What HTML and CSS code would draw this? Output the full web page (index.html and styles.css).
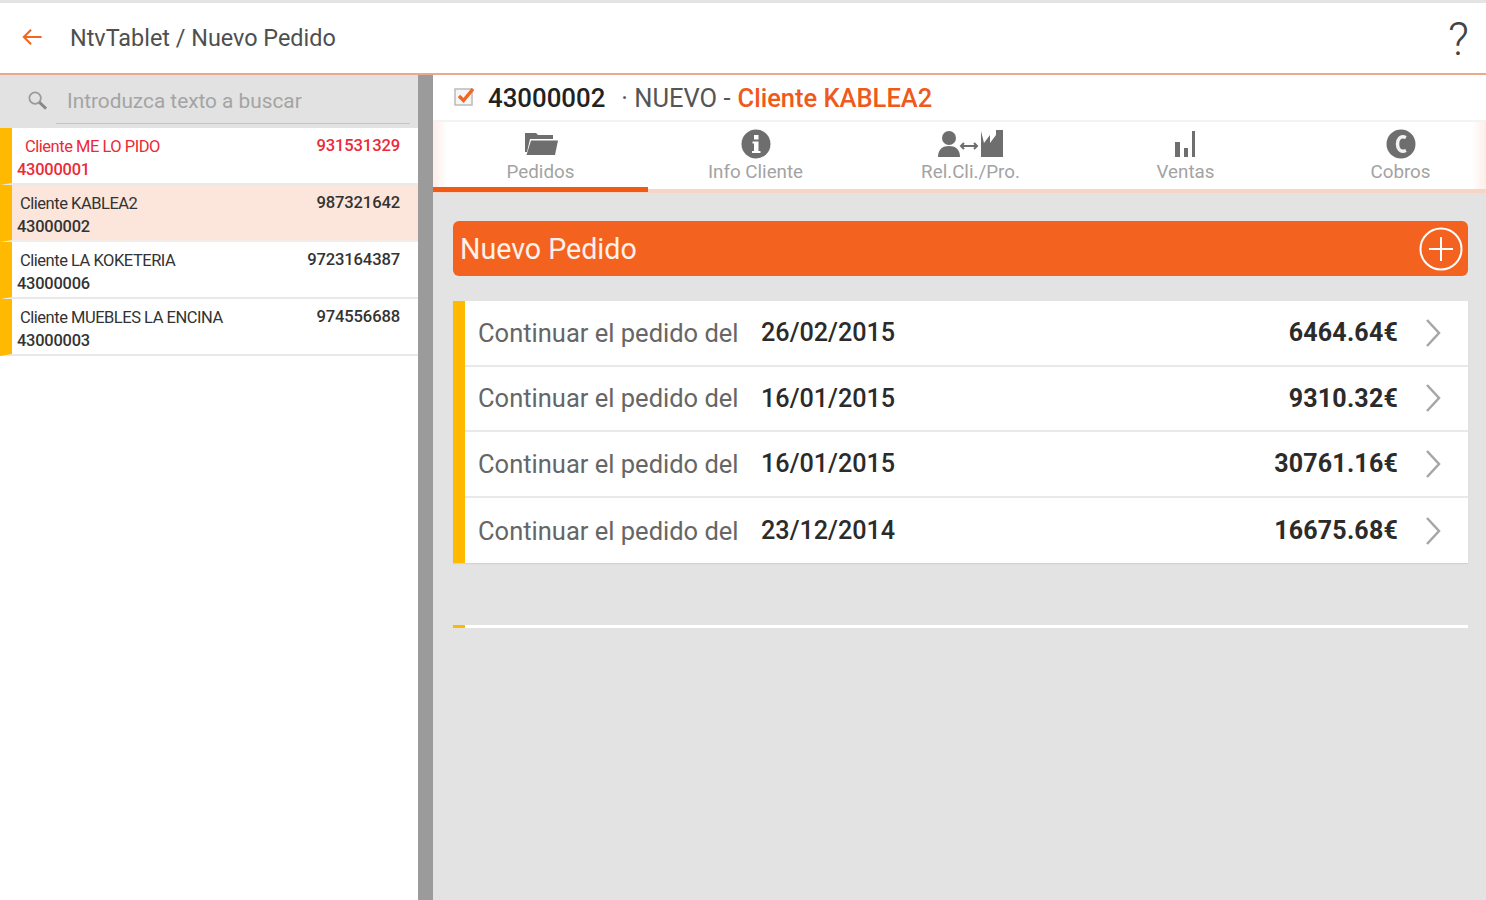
FILE: index.html
```html
<!DOCTYPE html>
<html lang="es">
<head>
<meta charset="utf-8">
<title>NtvTablet / Nuevo Pedido</title>
<link rel="stylesheet" href="styles.css">
</head>
<body>
<div class="app">
  <header class="topbar">
    <svg class="back" viewBox="0 0 24 20" aria-hidden="true"><path d="M21.5 10H3M10.5 2.5L3 10l7.5 7.5"/></svg>
    <span class="apptitle">NtvTablet / Nuevo Pedido</span>
    <span class="help">?</span>
  </header>
  <div class="main">
    <aside class="side">
      <div class="search">
        <svg class="lens" viewBox="0 0 22 22" aria-hidden="true"><circle cx="8.5" cy="8.5" r="6"/><path class="thick" d="M13 13l7 6.5"/></svg>
        <span class="placeholder">Introduzca texto a buscar</span>
        <span class="underline"></span>
      </div>
      <div class="client alert">
        <div class="l1"><span class="cname first">Cliente ME LO PIDO</span><span class="phone">931531329</span></div>
        <div class="code">43000001</div>
      </div>
      <div class="client selected">
        <div class="l1"><span class="cname">Cliente KABLEA2</span><span class="phone">987321642</span></div>
        <div class="code">43000002</div>
      </div>
      <div class="client">
        <div class="l1"><span class="cname">Cliente LA KOKETERIA</span><span class="phone">9723164387</span></div>
        <div class="code">43000006</div>
      </div>
      <div class="client">
        <div class="l1"><span class="cname">Cliente MUEBLES LA ENCINA</span><span class="phone">974556688</span></div>
        <div class="code">43000003</div>
      </div>
    </aside>
    <section class="detail">
      <div class="dhead">
        <svg class="check" viewBox="0 0 24 22" aria-hidden="true"><rect class="box" x="2" y="4" width="17" height="16"/><path class="tick" d="M6 11l4.500 4.500L20 4"/></svg>
        <span class="num">43000002</span>
        <span class="state">· NUEVO -</span>
        <span class="cli">Cliente KABLEA2</span>
      </div>
      <nav class="tabs">
        <div class="tab active">
          <svg class="ti" viewBox="0 0 36 28" aria-hidden="true"><path d="M2 3h11l2 2h15v4H7L4 22H2z"/><path d="M8 10.500h27L32 25H3.500z"/></svg>
          <span>Pedidos</span>
        </div>
        <div class="tab">
          <svg class="ti" viewBox="0 0 36 28" aria-hidden="true"><circle cx="18" cy="14" r="14.500"/><rect class="cut" x="16" y="5" width="4.500" height="4.500"/><path class="cut" d="M14.500 11.500h6v9.500h2v2h-8.500v-2h2v-7.500h-1.500z"/></svg>
          <span>Info Cliente</span>
        </div>
        <div class="tab">
          <svg class="ti wide" viewBox="0 0 68 28" aria-hidden="true"><circle cx="12" cy="8" r="7"/><path d="M1 27c0-8 5-11 11-11s11 3 11 11z"/><path class="line" d="M24 16h16M27 13l-3 3 3 3M37 13l3 3-3 3"/><path d="M44 1l3 12 6-8v8l6-8v-5h7v27H44z"/></svg>
          <span>Rel.Cli./Pro.</span>
        </div>
        <div class="tab">
          <svg class="ti" viewBox="0 0 36 28" aria-hidden="true"><rect x="7" y="12" width="5" height="15"/><rect x="16" y="18" width="4" height="9"/><rect x="24" y="1" width="3" height="26"/></svg>
          <span>Ventas</span>
        </div>
        <div class="tab">
          <svg class="ti" viewBox="0 0 36 28" aria-hidden="true"><circle cx="18" cy="14" r="14.500"/><path class="euro" d="M23 7.500c-6-2.500-8.500 2-8.500 6.500s2.500 9 8.500 6.500"/></svg>
          <span>Cobros</span>
        </div>
      </nav>
      <div class="content">
        <div class="newbar">
          <span>Nuevo Pedido</span>
          <svg class="plus" viewBox="0 0 44 44" aria-hidden="true"><circle cx="22" cy="22" r="20.500"/><path d="M22 10v24M10 22h24"/></svg>
        </div>
        <div class="orders">
          <div class="order"><span class="lbl">Continuar el pedido del</span><b class="date">26/02/2015</b><b class="amount">6464.64€</b><svg class="chev" viewBox="0 0 18 30" aria-hidden="true"><path d="M3 2l12 13L3 28"/></svg></div>
          <div class="order"><span class="lbl">Continuar el pedido del</span><b class="date">16/01/2015</b><b class="amount">9310.32€</b><svg class="chev" viewBox="0 0 18 30" aria-hidden="true"><path d="M3 2l12 13L3 28"/></svg></div>
          <div class="order"><span class="lbl">Continuar el pedido del</span><b class="date">16/01/2015</b><b class="amount">30761.16€</b><svg class="chev" viewBox="0 0 18 30" aria-hidden="true"><path d="M3 2l12 13L3 28"/></svg></div>
          <div class="order"><span class="lbl">Continuar el pedido del</span><b class="date">23/12/2014</b><b class="amount">16675.68€</b><svg class="chev" viewBox="0 0 18 30" aria-hidden="true"><path d="M3 2l12 13L3 28"/></svg></div>
        </div>
        <div class="endline"></div>
      </div>
    </section>
  </div>
</div>
</body>
</html>
```
FILE: styles.css
```css
* { box-sizing: border-box; }
html, body { margin: 0; height: 100%; overflow: hidden; }
body { font-family: Roboto, "Liberation Sans", sans-serif; background: #fff; color: #333; }
.app { height: 900px; display: flex; flex-direction: column; border-top: 3px solid #e4e4e4; }

.topbar { height: 72px; flex: none; display: flex; align-items: center; padding: 0 0 2px 21px; background: #fff; border-bottom: 2px solid #eba98c; }
.back { width: 23px; height: 20px; fill: none; stroke: #f26522; stroke-width: 2.2; }
.apptitle { margin-left: 26px; padding-top: 2px; font-size: 23.400px; color: #4f4f4f; }
.help { margin-left: auto; margin-right: 17px; padding-top: 4px; font-size: 46px; font-weight: 300; color: #444; line-height: 1; }

.main { flex: 1; display: flex; min-height: 0; }
.side { width: 433px; flex: none; background: #fff; border-right: 15px solid #9b9b9b; }
.search { position: relative; height: 53px; background: #e2e2e2; display: flex; align-items: center; padding: 0 0 2px 27px; }
.lens { width: 21px; height: 21px; fill: none; stroke: #9a9a9a; stroke-width: 1.800; }
.lens .thick { stroke-width: 3; stroke: #888; }
.placeholder { margin-left: 19px; font-size: 20.800px; color: #a4a4a4; }
.underline { position: absolute; left: 56px; right: 8px; bottom: 4px; height: 1px; background: #c4c4c4; }

.client { height: 57px; border-left: 12px solid #ffb900; border-bottom: 2px solid #e9e9e9; padding: 8px 18px 0 5px; color: #333; }
.client.selected { background: #fce6dc; border-bottom-color: #f4ece8; }
.client.alert { color: #ec2a37; }
.l1 { display: flex; justify-content: space-between; padding-left: 3px; line-height: 21px; font-size: 16.500px; letter-spacing: -0.480px; }
.cname.first { padding-left: 5px; }
.phone { font-size: 16.600px; font-weight: 500; letter-spacing: -0.150px; line-height: 19px; }
.code { font-size: 16.400px; font-weight: 500; line-height: 24px; margin-top: 1px; letter-spacing: -0.200px; }

.detail { flex: 1; display: flex; flex-direction: column; min-width: 0; }
.dhead { height: 45px; flex: none; display: flex; align-items: center; padding-left: 20px; font-size: 26px; background: #fff; }
.check { width: 24px; height: 22px; margin-top: -4px; }
.box { fill: #f5f5f5; stroke: #bbb; stroke-width: 1.500; }
.tick { fill: none; stroke: #f26522; stroke-width: 3.500; }
.num { margin-left: 11px; font-weight: 500; color: #222; font-size: 25.800px; }
.state { margin-left: 16px; color: #555; font-size: 25.500px; }
.cli { margin-left: 7px; color: #ef5a1b; font-weight: 500; font-size: 25.500px; }

.tabs { height: 73px; flex: none; display: flex; background: linear-gradient(to right, #fdeee7, #fff 14px, #fff calc(100% - 14px), #fdeee7); border-top: 2px solid #f3f3f3; border-bottom: 4px solid #f8d4c2; }
.tab { width: 215px; flex: none; margin-bottom: -3px; display: flex; flex-direction: column; align-items: center; padding-top: 8px; font-size: 18.800px; color: #a3a3a3; border-bottom: 5px solid transparent; }
.tab.active { border-bottom-color: #f05a14; }
.ti { width: 36px; height: 28px; fill: #6e6e6e; margin-bottom: 3px; overflow: visible; }
.ti.wide { width: 68px; }
.ti .cut { fill: #fff; }
.ti .line { fill: none; stroke: #6e6e6e; stroke-width: 2; }
.ti .euro { fill: none; stroke: #f2f2f2; stroke-width: 3.500; }

.content { flex: 1; background: #e3e3e3; padding: 28px 18px 0 20px; }
.newbar { height: 55px; background: #f4621f; border-radius: 6px; display: flex; align-items: center; justify-content: space-between; padding: 0 5px 0 7px; color: #fdf1ea; font-size: 28.600px; }
.plus { width: 44px; height: 44px; fill: none; stroke: #fff; stroke-width: 2; }

.orders { margin-top: 25px; border-left: 12px solid #ffb900; background: #fff; box-shadow: 0 1px 1px #d2d2d2; }
.order { height: 65.600px; display: flex; align-items: center; padding: 0 26px 0 13px; border-bottom: 2px solid #e9e9e9; font-size: 25.500px; }
.order:last-child { border-bottom: 0; }
.lbl { color: #666; width: 283px; flex: none; }
.date { font-weight: 500; color: #2b2b2b; font-size: 25.200px; }
.amount { margin-left: auto; font-weight: 700; color: #2b2b2b; letter-spacing: 0.200px; font-size: 25px; }
.chev { width: 18px; height: 30px; margin-left: 26px; fill: none; stroke: #a6a6a6; stroke-width: 2.500; }

.endline { margin-top: 62px; height: 3px; background: #fff; border-left: 12px solid #ffb900; }
```
